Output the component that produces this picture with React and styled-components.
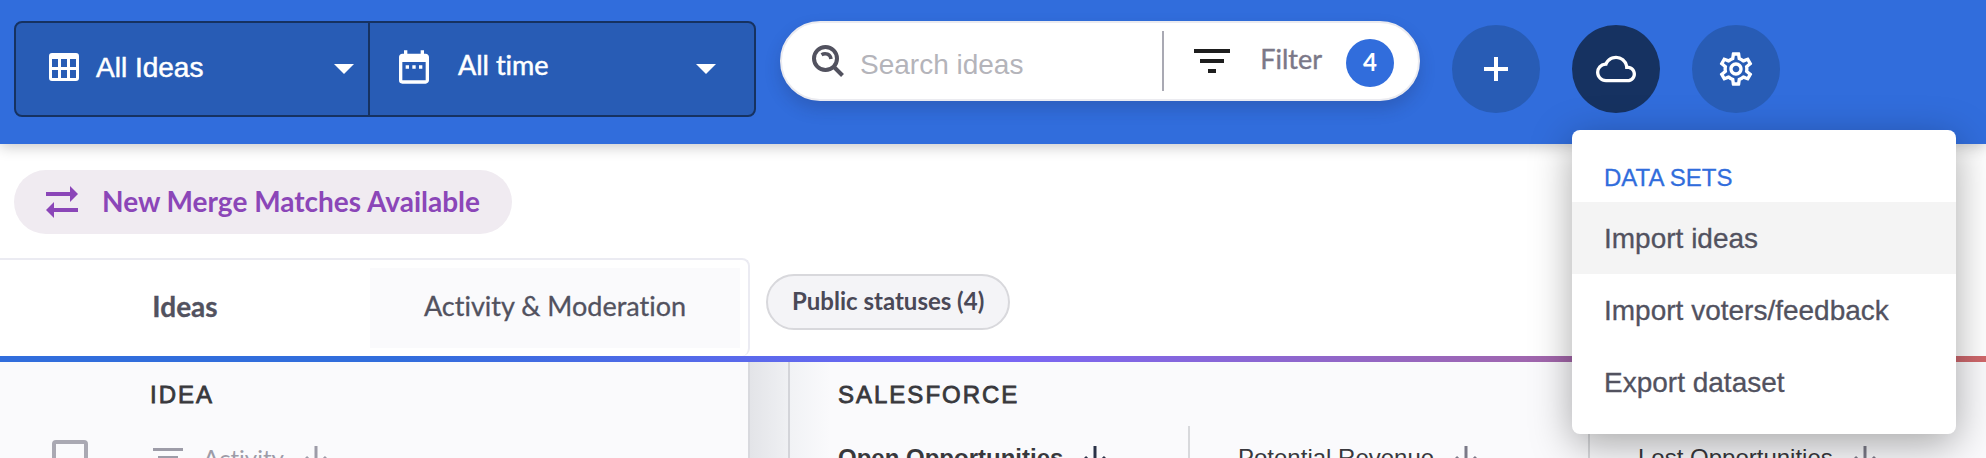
// Dependencies
import { useState } from 'react'
import styled, { createGlobalStyle, css } from 'styled-components'
import { MdCloudQueue, MdDateRange, MdOutlineSettings } from 'react-icons/md'

const sans = `'Liberation Sans', Arial, sans-serif`
const brand = `Lato, 'Open Sans', sans-serif`

const GlobalStyle = createGlobalStyle`
  * {
    box-sizing: border-box;
  }

  body {
    margin: 0;
    background: #fff;
    color: #52525f;
    font-family: ${sans};
    font-size: 24px;
    font-variant-ligatures: none;
  }

  button, input {
    margin: 0;
    padding: 0;
    border: 0;
    background: none;
    color: inherit;
    font: inherit;
    font-variant-ligatures: none;
  }

  svg {
    display: block;
    flex: none;
  }
`

const Page = styled.div`
  display: flex;
  flex-direction: column;
  height: 100vh;
  overflow: hidden;
`

// Top bar
const TopBar = styled.header`
  position: relative;
  z-index: 1;
  display: flex;
  align-items: flex-start;
  flex: none;
  height: 144px;
  padding: 21px 14px 0;
  background: #316ddc;
  box-shadow: 0 2px 14px rgba(0, 0, 0, 0.24);
`

const Selectors = styled.div`
  display: flex;
  height: 96px;
  border: 2px solid #163261;
  border-radius: 8px;
  background: #285cb5;
  color: #fff;
`

const Selector = styled.button`
  display: flex;
  align-items: center;
  width: ${props => props.$width}px;
  padding: 0 ${props => props.$end}px 0 ${props => props.$start}px;
  font-family: ${props => props.$brand ? brand : sans};
  font-size: ${props => props.$brand ? 27 : 28}px;
  line-height: 32px;
  -webkit-text-stroke: 0.5px;
  cursor: pointer;

  & + & {
    border-left: 2px solid #163261;
  }
`

const SelectorIcon = styled.span`
  padding-bottom: 4px;
`

const SelectorLabel = styled.span`
  flex: 1;
  padding-bottom: ${props => props.$lift}px;
  padding-left: ${props => props.$gap}px;
  text-align: left;
`

const SearchBar = styled.form`
  display: flex;
  align-items: center;
  width: 640px;
  height: 80px;
  margin-left: 24px;
  padding: 0 24px 0 30px;
  border: 2px solid #ebebf0;
  border-radius: 40px;
  background: #fff;
  box-shadow: 0 8px 16px rgba(30, 40, 80, 0.22);
`

const SearchInput = styled.input`
  flex: 1;
  min-width: 0;
  padding: 8px 0 0 16px;
  font-size: 28px;
  line-height: 32px;
  outline: none;

  &::placeholder {
    color: #b4b4ba;
    opacity: 1;
  }
`

const FilterButton = styled.button`
  display: flex;
  align-items: center;
  height: 60px;
  padding-left: 30px;
  border-left: 2px solid #a9a9b3;
  color: #7b7888;
  font-family: ${brand};
  font-size: 27px;
  line-height: 32px;
  cursor: pointer;
`

const FilterLabel = styled.span`
  padding: 0 24px 4px 30px;
  -webkit-text-stroke: 0.4px;
`

const FilterCount = styled.span`
  display: flex;
  align-items: center;
  justify-content: center;
  width: 48px;
  height: 48px;
  margin-top: 4px;
  padding-bottom: 2px;
  border-radius: 50%;
  background: #316ddc;
  color: #fff;
  font-size: 24px;
  font-weight: bold;
`

const Actions = styled.div`
  display: flex;
  gap: 32px;
  padding-top: 4px;
  margin-left: 32px;
`

const Action = styled.div`
  position: relative;
`

const RoundButton = styled.button`
  display: flex;
  align-items: center;
  justify-content: center;
  width: 88px;
  height: 88px;
  border-radius: 50%;
  background: ${props => props.$active ? '#163261' : '#285cb5'};
  color: #fff;
  cursor: pointer;
`

// Drop-down menu
const Menu = styled.div`
  position: absolute;
  top: 105px;
  left: 0;
  width: 384px;
  padding-bottom: 16px;
  border-radius: 8px;
  background: #fff;
  box-shadow: 0 10px 40px rgba(0, 0, 0, 0.34);
`

const MenuTitle = styled.div`
  padding: 34px 32px 10px;
  color: #316ddc;
  font-size: 24px;
  line-height: 28px;
  -webkit-text-stroke: 0.3px;
`

const MenuItem = styled.button`
  display: block;
  width: 100%;
  height: 72px;
  padding: 2px 32px 0;
  background: ${props => props.$selected ? '#f4f4f4' : 'none'};
  font-size: 28px;
  line-height: 32px;
  text-align: left;
  -webkit-text-stroke: 0.3px;
  cursor: pointer;

  &:last-child {
    border-radius: 0 0 8px 8px;
  }
`

// Notices and tabs
const Notice = styled.div`
  display: flex;
  flex: none;
  padding: 26px 14px 24px;
`

const MergeButton = styled.button`
  display: flex;
  align-items: center;
  height: 64px;
  padding: 0 32px;
  border-radius: 32px;
  background: #f0ebf1;
  color: #8b46b8;
  font-family: ${brand};
  font-size: 28px;
  font-weight: bold;
  line-height: 32px;
  cursor: pointer;
`

const MergeLabel = styled.span`
  padding: 0 0 3px 24px;
`

const TabBar = styled.div`
  display: flex;
  align-items: flex-start;
  flex: none;
  gap: 16px;
  height: 98px;
`

const Tabs = styled.div`
  display: flex;
  width: 750px;
  height: 98px;
  padding: 8px 8px 8px 0;
  border: 2px solid #ebebf2;
  border-left: 0;
  border-bottom: 0;
  border-radius: 0 8px 8px 0;
`

const Tab = styled.button`
  flex: 1;
  padding-bottom: 4px;
  background: ${props => props.$active ? '#fff' : '#fafafc'};
  font-family: ${brand};
  font-size: ${props => props.$active ? 28 : 27}px;
  font-weight: ${props => props.$active ? 'bold' : 'normal'};
  line-height: 32px;
  -webkit-text-stroke: 0.3px;
  cursor: pointer;
`

const StatusButton = styled.button`
  height: 56px;
  margin-top: 16px;
  padding: 0 24px 2px;
  border: 2px solid #d8d8dc;
  border-radius: 28px;
  background: #f4f4f7;
  color: #4a4957;
  font-family: ${brand};
  font-size: 24px;
  font-weight: bold;
  line-height: 28px;
  cursor: pointer;
`

const Stripe = styled.div`
  flex: none;
  height: 6px;
  background: linear-gradient(90deg, #316ddc 0, #316ddc 20%, #7766f6 50%, #a166ac 78%, #d0686a 100%);
`

// Tables
const Tables = styled.main`
  display: flex;
  flex: 1;
  min-height: 0;
  overflow: hidden;
  background: #fafafc;
`

const Divider = styled.div`
  flex: none;
  width: 38px;
  background: linear-gradient(90deg, #e3e4e8, #eff0f3);
`

const Table = styled.table`
  flex: none;
  width: ${props => props.$width}px;
  height: 136px;
  border-collapse: separate;
  border-spacing: 0;
  table-layout: fixed;
  ${props => props.$pinned ? css`
    border-right: 2px solid #d8d9de;
  ` : css`
    border-left: 2px solid #d3d4d9;
    background: linear-gradient(90deg, #f1f2f5, #fafafc 40px);
  `}
`

const GroupHeading = styled.th`
  height: 64px;
  padding: 2px 0 0 ${props => props.$start}px;
  color: #38383c;
  font-size: 24px;
  letter-spacing: 2px;
  line-height: 28px;
  text-align: left;
  text-transform: uppercase;
  font-weight: normal;
  -webkit-text-stroke: 0.8px;
`

const ColumnHeading = styled.th`
  height: 72px;
  padding: 0 0 8px ${props => props.$start}px;
  border-right: 2px solid ${props => props.$plain ? 'transparent' : '#d8d9dc'};
  color: ${props => props.$plain ? '#9d9ca8' : '#38383c'};
  font-family: ${props => props.$plain ? brand : sans};
  font-size: 24px;
  font-weight: ${props => props.$sorted ? 'bold' : 'normal'};
  text-align: left;
`

const SortButton = styled.button`
  display: flex;
  align-items: center;
  gap: 20px;
  line-height: 28px;
  white-space: nowrap;
  cursor: pointer;
`

const Checkbox = styled.input`
  display: block;
  appearance: none;
  width: 36px;
  height: 36px;
  border: 4px solid #aaa9b3;
  border-radius: 4px;
`

const GridIcon = () => (
  <svg width="30" height="28" viewBox="0 0 30 28" fill="currentColor">
    <path
      fillRule="evenodd"
      d="M3 0h24a3 3 0 0 1 3 3v22a3 3 0 0 1-3 3H3a3 3 0 0 1-3-3V3a3 3 0 0 1 3-3zM3 6v8h6V6zM12 6v8h6V6zM21 6v8h6V6zM3 17v8h6v-8zM12 17v8h6v-8zM21 17v8h6v-8z"
    />
  </svg>
)

const Caret = () => (
  <svg width="20" height="10" viewBox="0 0 20 10" fill="currentColor">
    <path d="M0 0h20L10 10z" />
  </svg>
)

const SearchIcon = () => (
  <svg width="32" height="32" viewBox="0 0 32 32" fill="none" stroke="#52525f" strokeWidth="4">
    <circle cx="13.5" cy="13.5" r="11.5" />
    <path d="M21.5 21.5l9 9" />
    <path d="M9.5 9.8c4-2.500 9-.5 9.500 4.200" strokeWidth="3.500" />
  </svg>
)

const FilterIcon = () => (
  <svg width="36" height="24" viewBox="0 0 36 24" fill="#1e1e1e">
    <path d="M0 0h36v4H0zM6 10h24v4H6zM14 20h8v4h-8z" />
  </svg>
)

const PlusIcon = () => (
  <svg width="24" height="24" viewBox="0 0 24 24" fill="currentColor">
    <path d="M10 0h4v10h10v4H14v10h-4V14H0v-4h10z" />
  </svg>
)

const MergeIcon = () => (
  <svg width="32" height="32" viewBox="0 0 32 32" fill="currentColor">
    <path d="M0 6h24V0l8 8-8 8v-6H0zM32 26H8v6l-8-8 8-8v6h24z" />
  </svg>
)

const LinesIcon = () => (
  <svg width="30" height="20" viewBox="0 0 30 20" fill="currentColor">
    <path d="M0 0h30v3H0zM5 8h20v3H5zM11 16h8v3h-8z" />
  </svg>
)

const ArrowIcon = ({ color = '#7b7a88' }) => (
  <svg width="24" height="24" viewBox="0 0 24 24" fill="none" stroke={color} strokeWidth="3">
    <path d="M12 0v21M2 11l10 10 10-10" />
  </svg>
)

const menuItems = ['Import ideas', 'Import voters/feedback', 'Export dataset']

const columns = [
  { label: 'Open Opportunities', sorted: true },
  { label: 'Potential Revenue' },
  { label: 'Lost Opportunities' }
]

const DataMenu = () => (
  <Menu role="menu">
    <MenuTitle>DATA SETS</MenuTitle>
    {menuItems.map((item, i) => (
      <MenuItem key={item} role="menuitem" type="button" $selected={i === 0}>
        {item}
      </MenuItem>
    ))}
  </Menu>
)

const Header = () => {
  const [open, setOpen] = useState(true)
  const [term, setTerm] = useState('')

  return (
    <TopBar>
      <Selectors>
        <Selector type="button" $width={352} $start={33} $end={14}>
          <SelectorIcon>
            <GridIcon />
          </SelectorIcon>
          <SelectorLabel $gap={17} $lift={2}>All Ideas</SelectorLabel>
          <Caret />
        </Selector>
        <Selector type="button" $brand $width={386} $start={24} $end={38}>
          <SelectorIcon>
            <MdDateRange size={40} />
          </SelectorIcon>
          <SelectorLabel $gap={24} $lift={8}>All time</SelectorLabel>
          <Caret />
        </Selector>
      </Selectors>
      <SearchBar onSubmit={event => event.preventDefault()}>
        <SearchIcon />
        <SearchInput
          aria-label="Search ideas"
          onChange={({ currentTarget: { value } }) => setTerm(value)}
          placeholder="Search ideas"
          type="text"
          value={term}
        />
        <FilterButton type="button">
          <FilterIcon />
          <FilterLabel>Filter</FilterLabel>
          <FilterCount>4</FilterCount>
        </FilterButton>
      </SearchBar>
      <Actions>
        <Action>
          <RoundButton type="button" aria-label="Add">
            <PlusIcon />
          </RoundButton>
        </Action>
        <Action>
          <RoundButton
            type="button"
            aria-label="Data sets"
            aria-expanded={open}
            onClick={() => setOpen(!open)}
            $active={open}
          >
            <MdCloudQueue size={40} />
          </RoundButton>
          {open && <DataMenu />}
        </Action>
        <Action>
          <RoundButton type="button" aria-label="Settings">
            <MdOutlineSettings size={40} />
          </RoundButton>
        </Action>
      </Actions>
    </TopBar>
  )
}

export default function App() {
  const [tab, setTab] = useState('Ideas')

  return (
    <Page>
      <GlobalStyle />
      <Header />
      <Notice>
        <MergeButton type="button">
          <MergeIcon />
          <MergeLabel>New Merge Matches Available</MergeLabel>
        </MergeButton>
      </Notice>
      <TabBar>
        <Tabs role="tablist">
          {['Ideas', 'Activity & Moderation'].map(name => (
            <Tab
              key={name}
              role="tab"
              type="button"
              aria-selected={tab === name}
              onClick={() => setTab(name)}
              $active={tab === name}
            >
              {name}
            </Tab>
          ))}
        </Tabs>
        <StatusButton type="button">Public statuses (4)</StatusButton>
      </TabBar>
      <Stripe />
      <Tables>
        <Table $pinned $width={750}>
          <colgroup>
            <col width="150" />
            <col />
          </colgroup>
          <thead>
            <tr>
              <td />
              <GroupHeading $start={0}>Idea</GroupHeading>
            </tr>
            <tr>
              <ColumnHeading $plain $start={52}>
                <Checkbox type="checkbox" aria-label="Select all ideas" />
              </ColumnHeading>
              <ColumnHeading $plain $start={3}>
                <SortButton type="button">
                  <LinesIcon />
                  Activity
                  <ArrowIcon color="#9d9ca8" />
                </SortButton>
              </ColumnHeading>
            </tr>
          </thead>
        </Table>
        <Divider />
        <Table $width={1202}>
          <thead>
            <tr>
              <GroupHeading $start={48} colSpan={3}>Salesforce</GroupHeading>
            </tr>
            <tr>
              {columns.map(({ label, sorted }) => (
                <ColumnHeading key={label} $start={48} $sorted={sorted}>
                  <SortButton type="button">
                    {label}
                    <ArrowIcon color={sorted ? '#2b3348' : undefined} />
                  </SortButton>
                </ColumnHeading>
              ))}
            </tr>
          </thead>
        </Table>
      </Tables>
    </Page>
  )
}
